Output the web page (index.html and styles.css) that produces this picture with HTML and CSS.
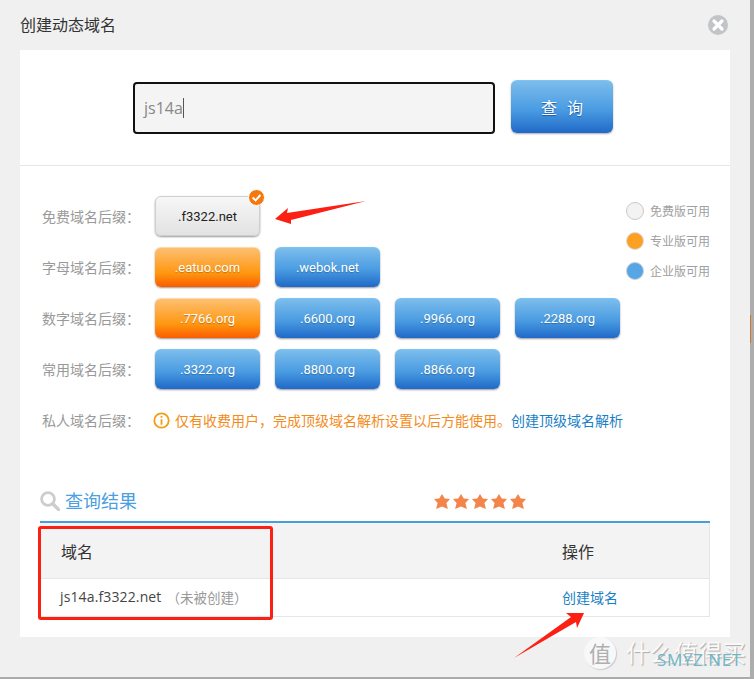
FILE: index.html
```html
<!DOCTYPE html>
<html lang="zh">
<head>
<meta charset="utf-8">
<title>创建动态域名</title>
<link rel="stylesheet" href="styles.css">
</head>
<body>
<div class="screen">
  <div class="dialog">
    <header class="head">
      <h1 class="title">创建动态域名</h1>
      <svg class="close" width="20" height="20" viewBox="0 0 20 20"><circle cx="10" cy="10" r="10" fill="#c3c4c7"/><path d="M6 6l8 8M14 6l-8 8" stroke="#fff" stroke-width="3.2" stroke-linecap="round"/></svg>
    </header>
    <main class="panel">
      <section class="search">
        <div class="input"><span>js14a</span><i class="caret"></i></div>
        <button class="go">查<span class="go-gap"></span>询</button>
      </section>
      <section class="form">
        <div class="rows">
          <div class="row"><span class="label">免费域名后缀：</span>
            <div class="suffix grey">.f3322.net<svg class="tick" width="17" height="17" viewBox="0 0 17 17"><circle cx="8.5" cy="8.5" r="8" fill="#f5780f" stroke="#fff" stroke-width="1"/><path d="M4.6 8.6l3 2.8 4.8-5.4" fill="none" stroke="#fff" stroke-width="2"/></svg></div>
          </div>
          <div class="row"><span class="label">字母域名后缀：</span>
            <div class="suffix orange">.eatuo.com</div><div class="suffix blue">.webok.net</div>
          </div>
          <div class="row"><span class="label">数字域名后缀：</span>
            <div class="suffix orange">.7766.org</div><div class="suffix blue">.6600.org</div><div class="suffix blue">.9966.org</div><div class="suffix blue">.2288.org</div>
          </div>
          <div class="row"><span class="label">常用域名后缀：</span>
            <div class="suffix blue">.3322.org</div><div class="suffix blue">.8800.org</div><div class="suffix blue">.8866.org</div>
          </div>
          <div class="row private"><span class="label">私人域名后缀：</span>
            <svg class="info" width="17" height="17" viewBox="0 0 17 17"><circle cx="8.5" cy="8.5" r="7.2" fill="none" stroke="#f39c12" stroke-width="1.8"/><path d="M8.5 4v1.8M8.5 7.2v5.6" stroke="#f39c12" stroke-width="1.8"/></svg>
            <span class="note">仅有收费用户，完成顶级域名解析设置以后方能使用。</span><a class="link note-link">创建顶级域名解析</a>
          </div>
        </div>
        <ul class="legend">
          <li><i class="dot d-free"></i>免费版可用</li>
          <li><i class="dot d-pro"></i>专业版可用</li>
          <li><i class="dot d-ent"></i>企业版可用</li>
        </ul>
      </section>
      <section class="results">
        <div class="results-head">
          <svg class="mag" width="20" height="20" viewBox="0 0 20 20"><circle cx="8" cy="8" r="6.4" fill="none" stroke="#cdcdcd" stroke-width="2.8"/><path d="M12.8 12.8L18.6 18.6" stroke="#cdcdcd" stroke-width="3.4" stroke-linecap="round"/></svg>
          <h2 class="results-title">查询结果</h2>
          <div class="stars">
            <svg width="16" height="15" viewBox="0 0 16 15"><path class="star" d="M8 0l2.8 4.6 5.2.4-3.6 4 1.5 6L8 12.4 2.1 15l1.5-6L0 5l5.2-.4z"/></svg>
            <svg width="16" height="15" viewBox="0 0 16 15"><path class="star" d="M8 0l2.8 4.6 5.2.4-3.6 4 1.5 6L8 12.4 2.1 15l1.5-6L0 5l5.2-.4z"/></svg>
            <svg width="16" height="15" viewBox="0 0 16 15"><path class="star" d="M8 0l2.8 4.6 5.2.4-3.6 4 1.5 6L8 12.4 2.1 15l1.5-6L0 5l5.2-.4z"/></svg>
            <svg width="16" height="15" viewBox="0 0 16 15"><path class="star" d="M8 0l2.8 4.6 5.2.4-3.6 4 1.5 6L8 12.4 2.1 15l1.5-6L0 5l5.2-.4z"/></svg>
            <svg width="16" height="15" viewBox="0 0 16 15"><path class="star" d="M8 0l2.8 4.6 5.2.4-3.6 4 1.5 6L8 12.4 2.1 15l1.5-6L0 5l5.2-.4z"/></svg>
          </div>
        </div>
        <div class="table">
          <div class="tr th"><span class="c1">域名</span><span class="c2">操作</span></div>
          <div class="tr td"><span class="c1 domain">js14a.f3322.net<span class="state">（未被创建）</span></span><a class="c2 link">创建域名</a></div>
        </div>
      </section>
    </main>
  </div>
  <div class="edge"><i class="edge-mark"></i></div>

  <div class="redbox"></div>
  <svg class="arrows" width="754" height="679" viewBox="0 0 754 679">
    <path fill="#fb1f14" d="M275 219L288 208 287 213 366 201 291 220 291 224z"/>
    <path fill="#fb1f14" d="M584 613L566 613 571 617 514 658 576 622 577 628z"/>
  </svg>
  <div class="mark">
    <span class="mark-badge">值</span><span class="mark-cn">什么值得买</span><span class="mark-en">SMYZ.NET</span>
  </div>
</div>
</body>
</html>
```
FILE: styles.css
```css
* { box-sizing: border-box; }
html, body { margin: 0; padding: 0; }
body { font-family: "Open Sans", "Noto Sans CJK SC", sans-serif; background: #f0f0f0; }
.screen { position: relative; width: 754px; height: 679px; display: flex; overflow: hidden; border-bottom: 2px solid #ababab; }
.dialog { width: 750px; height: 677px; background: #f0f0f0; padding: 0 20px; }
.edge { position: relative; width: 4px; background: #adadad; }
.edge-mark { position: absolute; left: 0; top: 315px; width: 1px; height: 28px; background: #c8762a; }

.head { height: 50px; display: flex; align-items: center; justify-content: space-between; }
.title { margin: 0; font-size: 16px; font-weight: 400; color: #333; line-height: 50px; }
.close { margin-right: 2px; }

.panel { background: #fff; height: 587px; }
.search { height: 116px; display: flex; gap: 16px; padding: 30px 0 0 113px; border-bottom: 1px solid #e5e5e5; }
.input { width: 362px; height: 52px; margin-top: 2px; border: 2px solid #111; border-radius: 4px; background: #f4f4f4; display: flex; align-items: center; padding-left: 9px; font-size: 16px; color: #888; }
.caret { width: 1px; height: 20px; background: #555; }
.go { width: 102px; height: 53px; padding: 0; border: 0; border-top: 1px solid #7cc4f5; border-radius: 6px; background: linear-gradient(#7cbdec, #4a9ce2 55%, #2069c8); box-shadow: 0 1px 2px #aaa; color: #fff; font: 16px "Noto Sans CJK SC", sans-serif; text-shadow: 0 1px 1px #1c5aa8; display: flex; align-items: center; justify-content: center; }
.go-gap { width: 10px; }

.form { display: flex; justify-content: space-between; padding: 30px 20px 0 22px; }
.rows { display: flex; flex-direction: column; gap: 11px; }
.row { display: flex; align-items: center; gap: 15px; height: 40px; }
.label { width: 98px; font-size: 14px; color: #999; white-space: nowrap; }
.suffix { position: relative; width: 105px; height: 40px; border-radius: 6px; display: flex; align-items: center; justify-content: center; font-family: Roboto, sans-serif; font-size: 13px; color: #fff; text-shadow: 0 1px 1px rgba(0,0,0,.25); box-shadow: 0 1px 2px #999; }
.blue { background: linear-gradient(#7cbdec, #4a9ce2 55%, #2069c8); border-top: 1px solid #7cc4f5; }
.orange { background: linear-gradient(#fdc071, #ff960f 65%, #fb5c00); border-top: 1px solid #ffd9a8; }
.grey { background: linear-gradient(#f7f7f7, #e2e2e2); border: 1px solid #cfcfcf; color: #222; text-shadow: none; }
.tick { position: absolute; right: -6px; top: -8px; }
.private { height: 20px; margin-top: 10px; gap: 0; }
.private .label { margin-right: 13px; }
.info { margin-right: 5px; }
.note { font-size: 14px; color: #f28c1c; white-space: nowrap; }
.note-link { font-size: 14px; white-space: nowrap; }
.link { color: #1a7fc6; }

.legend { list-style: none; margin: 6px 0 0; padding: 0; display: flex; flex-direction: column; gap: 12px; }
.legend li { height: 18px; display: flex; align-items: center; gap: 6px; font-size: 12px; color: #a0a0a0; white-space: nowrap; }
.dot { width: 18px; height: 18px; border-radius: 50%; border: 1px solid #c9c9c9; }
.d-free { background: #f3f3f3; }
.d-pro { background: #fca024; border-color: #ddd; }
.d-ent { background: #56a6e4; border-color: #ccd; }

.results { padding: 59px 20px 0; }
.results-head { position: relative; height: 34px; border-bottom: 2px solid #469edc; display: flex; align-items: flex-start; padding-top: 2px; }
.mag { margin: 0 5px 0 0; }
.results-title { margin: -3px 0 0; font-size: 18px; font-weight: 400; color: #4aa0e0; line-height: 26px; }
.stars { display: flex; gap: 3px; margin: 3px 0 0 297px; }
.star { fill: #f3854a; }

.table { border-right: 1px solid #e6e6e6; }
.tr { display: flex; align-items: center; }
.th { height: 56px; background: #f3f3f3; border-bottom: 1px solid #e6e6e6; font-size: 16px; color: #333; }
.td { height: 38px; padding-bottom: 2px; border-bottom: 1px solid #e6e6e6; font-size: 14px; color: #444; }
.c1 { margin-left: 21px; width: 501px; }
.c2 { white-space: nowrap; }
.td .c1 { margin-left: 20px; width: 502px; }
.domain { display: flex; align-items: center; letter-spacing: .13px; }
.td .link { font-size: 14px; }
.state { margin-left: 5px; font-size: 13.5px; letter-spacing: 0; color: #999; }

.redbox { position: absolute; left: 38px; top: 526px; width: 235px; height: 94px; border: 3px solid #fb1f14; border-radius: 3px; }
.arrows { position: absolute; left: 0; top: 0; pointer-events: none; }
.mark { position: absolute; left: 584px; top: 636px; width: 160px; height: 34px; }
.mark-badge { position: absolute; left: 0; top: 1px; width: 32px; height: 32px; border-radius: 50%; background: #f8f8f8; box-shadow: 1px 1px 1px #ccc; color: #b0b0b0; font-size: 22px; line-height: 32px; text-align: center; }
.mark-cn { position: absolute; left: 42px; top: 1px; font-size: 24px; line-height: 32px; color: #fafafa; white-space: nowrap; text-shadow: 1px 1px 1px #aaa; }
.mark-en { position: absolute; left: 73px; top: 14px; font-size: 17px; line-height: 20px; letter-spacing: .6px; color: #6fb6c6; white-space: nowrap; }
```
